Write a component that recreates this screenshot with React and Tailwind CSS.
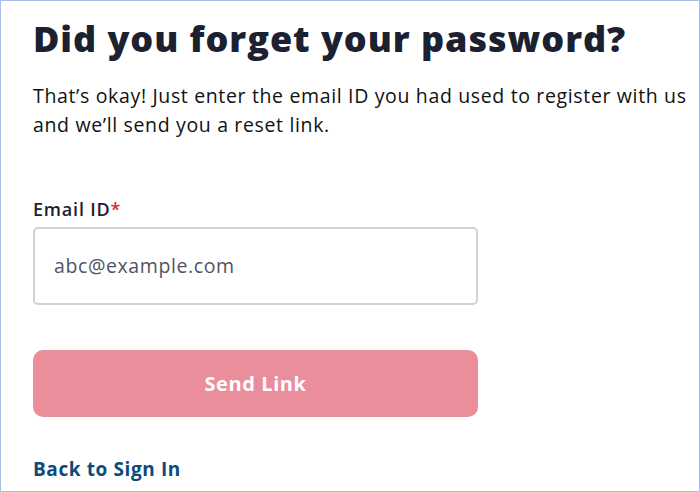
export default function App() {
  return (
    <div
      className="w-[700px] h-[492px] border border-[#a9bde6] bg-white overflow-hidden"
      style={{ fontFamily: '"Open Sans", "Noto Sans", sans-serif' }}
    >
      <div className="pl-[32px] pt-[16px]">
        <h1 className="text-[36px] leading-[44px] font-extrabold text-[#1b2130] tracking-[0.95px]">
          Did you forget your password?
        </h1>
        <p className="mt-[20px] text-[19.5px] leading-[29px] text-[#111] tracking-[0.65px] w-[670px]">
          That’s okay! Just enter the email ID you had used to register with us and we’ll send you a reset link.
        </p>
        <div className="mt-[59px] text-[18px] leading-[22px] font-semibold text-[#1b2130] tracking-[0.8px]">
          Email ID<span className="text-[#e0282e]">*</span>
        </div>
        <div className="mt-[7px] w-[445px] h-[78px] rounded-[5px] border-2 border-[#d2d2d2] flex items-center pl-[19px] text-[19.5px] text-[#505561] tracking-[0.6px]">
          abc@example.com
        </div>
        <button className="mt-[45px] w-[445px] h-[67px] rounded-[10px] bg-[#e98e9a] text-white text-[20px] font-bold tracking-[0.6px] flex items-center justify-center">
          Send Link
        </button>
        <div className="mt-[39px] text-[19px] leading-[26px] font-bold text-[#0b4a7c] tracking-[0.6px]">Back to Sign In</div>
      </div>
    </div>
  );
}
